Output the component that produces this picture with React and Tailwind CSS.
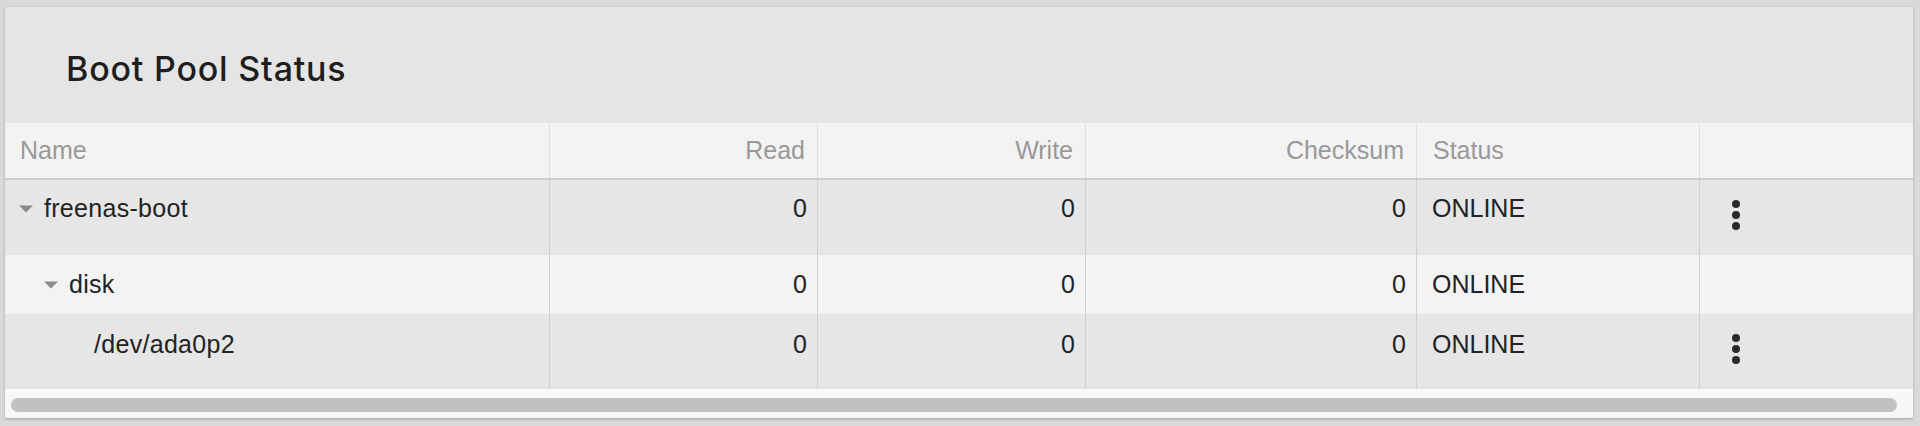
import React from 'react';

const columns = [
  { key: 'name', label: 'Name', width: 'w-[545px]', align: 'justify-start pl-[15px]' },
  { key: 'read', label: 'Read', width: 'w-[268px]', align: 'justify-end pr-[12px]' },
  { key: 'write', label: 'Write', width: 'w-[268px]', align: 'justify-end pr-[12px]' },
  { key: 'checksum', label: 'Checksum', width: 'w-[331px]', align: 'justify-end pr-[12px]' },
  { key: 'status', label: 'Status', width: 'w-[283px]', align: 'justify-start pl-[16px]' },
  { key: 'actions', label: '', width: 'w-[213px]', align: 'justify-start' },
];

const rows = [
  { name: 'freenas-boot', level: 0, expandable: true, read: 0, write: 0, checksum: 0, status: 'ONLINE', menu: true, height: 'h-[75px]', pad: 'pt-[13px]', bg: 'bg-[#e6e6e6]' },
  { name: 'disk', level: 1, expandable: true, read: 0, write: 0, checksum: 0, status: 'ONLINE', menu: false, height: 'h-[59px]', pad: 'pt-[14px]', bg: 'bg-[#f3f3f3]' },
  { name: '/dev/ada0p2', level: 2, expandable: false, read: 0, write: 0, checksum: 0, status: 'ONLINE', menu: true, height: 'h-[75px]', pad: 'pt-[15px]', bg: 'bg-[#e6e6e6]' },
];

const indent = ['pl-[14px]', 'pl-[39px]', 'pl-[89px]'];

const Caret = () => (
  <svg width="14" height="8" viewBox="0 0 14 8" className="mr-[11px] mt-[2px] shrink-0">
    <path d="M0 0.5 L14 0.5 L7 7.5 Z" fill="#8a8a8a" />
  </svg>
);

const Kebab = () => (
  <button className="flex flex-col items-center gap-[3px] ml-[32px] mt-[20px]">
    <span className="block w-[8px] h-[8px] rounded-full bg-[#2a2a2a]" />
    <span className="block w-[8px] h-[8px] rounded-full bg-[#2a2a2a]" />
    <span className="block w-[8px] h-[8px] rounded-full bg-[#2a2a2a]" />
  </button>
);

const App = () => {
  return (
    <div
      className="w-full h-[426px] bg-[#d9d9d9] pt-[7px] pl-[5px] pr-[7px]"
      style={{ fontFamily: '"Liberation Sans", Arial, sans-serif' }}
    >
      <div className="h-[411px] bg-[#e5e5e5] rounded-[2px] shadow-[0_1px_3px_rgba(0,0,0,0.25)] overflow-hidden flex flex-col">
        <div className="h-[116px] flex items-center pl-[61px] pt-[6px]">
          <h1
            className="text-[34px] font-medium text-[#1e1e1e] tracking-[0.8px]"
            style={{ fontFamily: 'Inter, "Liberation Sans", sans-serif' }}
          >
            Boot Pool Status
          </h1>
        </div>

        <div className="flex flex-col">
          <div className="flex h-[57px] bg-[#f3f3f3] border-b-2 border-[#cdcdcd]">
            {columns.map((col, i) => (
              <div
                key={col.key}
                className={`${col.width} ${col.align} flex items-center ${
                  i < columns.length - 1 ? 'border-r border-[#dedede]' : ''
                } text-[25px] text-[#999999]`}
              >
                {col.label}
              </div>
            ))}
          </div>

          {rows.map((row) => (
            <div key={row.name} className={`flex ${row.height} ${row.bg} text-[25px] text-[#222222] leading-[30px]`}>
              <div className={`w-[545px] border-r border-[#d0d0d0] flex items-start ${row.pad} ${indent[row.level]}`}>
                {row.expandable && (
                  <span className="h-[30px] flex items-center">
                    <Caret />
                  </span>
                )}
                <span className="tracking-[0.3px]">{row.name}</span>
              </div>
              <div className={`w-[268px] border-r border-[#d0d0d0] text-right pr-[10px] ${row.pad}`}>{row.read}</div>
              <div className={`w-[268px] border-r border-[#d0d0d0] text-right pr-[10px] ${row.pad}`}>{row.write}</div>
              <div className={`w-[331px] border-r border-[#d0d0d0] text-right pr-[10px] ${row.pad}`}>{row.checksum}</div>
              <div className={`w-[283px] border-r border-[#d0d0d0] pl-[15px] ${row.pad}`}>{row.status}</div>
              <div className="w-[213px]">{row.menu && <Kebab />}</div>
            </div>
          ))}
        </div>

        <div className="flex-1 bg-[#f7f7f7] border-t-[3px] border-[#fafafa] pl-[6px] pr-[16px] pt-[6px]">
          <div className="h-[14px] rounded-full bg-[#c1c1c1]" />
        </div>
      </div>
    </div>
  );
};

export default App;
